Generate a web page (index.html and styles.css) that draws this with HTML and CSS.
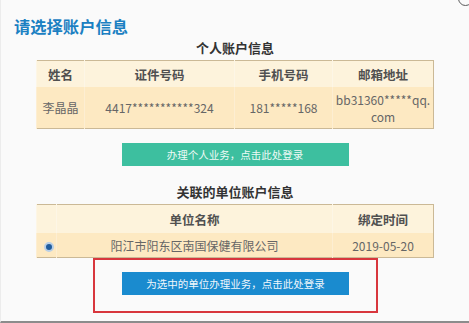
FILE: index.html
```html
<!DOCTYPE html>
<html lang="zh-CN">
<head>
<meta charset="utf-8">
<title>请选择账户信息</title>
<link rel="stylesheet" href="styles.css">
</head>
<body>
<div class="frame">
  <span class="corner-icon"></span>
  <h1 class="title">请选择账户信息</h1>

  <h2 class="section-title">个人账户信息</h2>
  <table class="info-table personal">
    <colgroup>
      <col class="c-name"><col class="c-id"><col class="c-phone"><col class="c-mail">
    </colgroup>
    <thead>
      <tr><th>姓名</th><th>证件号码</th><th>手机号码</th><th>邮箱地址</th></tr>
    </thead>
    <tbody>
      <tr class="tall"><td>李晶晶</td><td>4417***********324</td><td>181*****168</td><td class="mail">bb31360*****qq.<br>com</td></tr>
    </tbody>
  </table>
  <div class="btn-row">
    <a class="btn btn-green">办理个人业务，点击此处登录</a>
  </div>

  <h2 class="section-title second">关联的单位账户信息</h2>
  <table class="info-table company">
    <colgroup>
      <col class="c-radio"><col class="c-unit"><col class="c-time">
    </colgroup>
    <thead>
      <tr><th></th><th>单位名称</th><th>绑定时间</th></tr>
    </thead>
    <tbody>
      <tr><td><span class="radio"></span></td><td>阳江市阳东区南国保健有限公司</td><td>2019-05-20</td></tr>
    </tbody>
  </table>
  <div class="highlight">
    <a class="btn btn-blue">为选中的单位办理业务，点击此处登录</a>
  </div>
</div>
</body>
</html>
```

FILE: styles.css
```css
html, body {
  margin: 0;
  padding: 0;
}
body {
  background: #fafafa;
  font-family: "Noto Sans CJK SC", sans-serif;
  width: 469px;
  height: 323px;
  overflow: hidden;
}
.frame {
  position: relative;
  box-sizing: border-box;
  height: 323px;
  border-bottom: 2px solid #8c8c8c;
  border-left: 1px solid #ececec;
  overflow: hidden;
}
.corner-icon {
  position: absolute;
  left: 457px;
  top: -9px;
  width: 13px;
  height: 13px;
  border: 1.5px solid #5a5a5a;
  border-radius: 50%;
}
.title {
  margin: 0;
  padding: 16px 0 0 13px;
  font-size: 16.3px;
  line-height: 20px;
  font-weight: bold;
  color: #1b80c2;
}
.section-title {
  margin: 3px 0 0;
  text-align: center;
  font-size: 13px;
  line-height: 18px;
  font-weight: bold;
  color: #333;
}
.section-title.second {
  margin-top: 17px;
}
.info-table {
  margin: 3px auto 0;
  width: 397px;
  border-collapse: collapse;
  table-layout: fixed;
  border: 1px solid #cbb996;
  font-size: 12px;
  text-align: center;
}
.info-table.company {
  margin-top: 3px;
}
.info-table th {
  background: #fdf3dc;
  color: #505050;
  font-weight: bold;
  font-size: 12.5px;
  height: 26px;
  padding: 0;
  border-left: 1px solid #fdf6e6;
}
.info-table td {
  background: #fde9c2;
  color: #666;
  height: 24px;
  padding: 0;
  line-height: 17px;
  border-left: 1px solid #fdeed2;
}
.info-table tr.tall td {
  height: 41px;
}
.c-name { width: 48px; }
.c-id { width: 150px; }
.c-phone { width: 98px; }
.c-mail { width: 101px; }
.c-radio { width: 20px; }
.c-unit { width: 276px; }
.c-time { width: 101px; }
.info-table.company th {
  height: 28px;
}
.radio {
  display: inline-block;
  vertical-align: middle;
  width: 6px;
  height: 6px;
  border-radius: 50%;
  background: #1f5c9e;
  border: 2px solid #b9cfe6;
  margin-left: 4px;
}
.btn-row {
  display: flex;
  justify-content: center;
  margin-top: 14px;
}
.btn {
  display: block;
  width: 227px;
  height: 23px;
  line-height: 23px;
  text-align: center;
  font-size: 10.5px;
  color: #eefaf6;
}
.btn-green {
  background: #3dbf9f;
}
.btn-blue {
  background: #1a8bcf;
  color: #f0f7fc;
}
.highlight {
  box-sizing: border-box;
  width: 285px;
  height: 55px;
  margin: 0 0 0 92px;
  border: 2px solid #d8363d;
  display: flex;
  justify-content: center;
  padding-top: 12px;
}
```
